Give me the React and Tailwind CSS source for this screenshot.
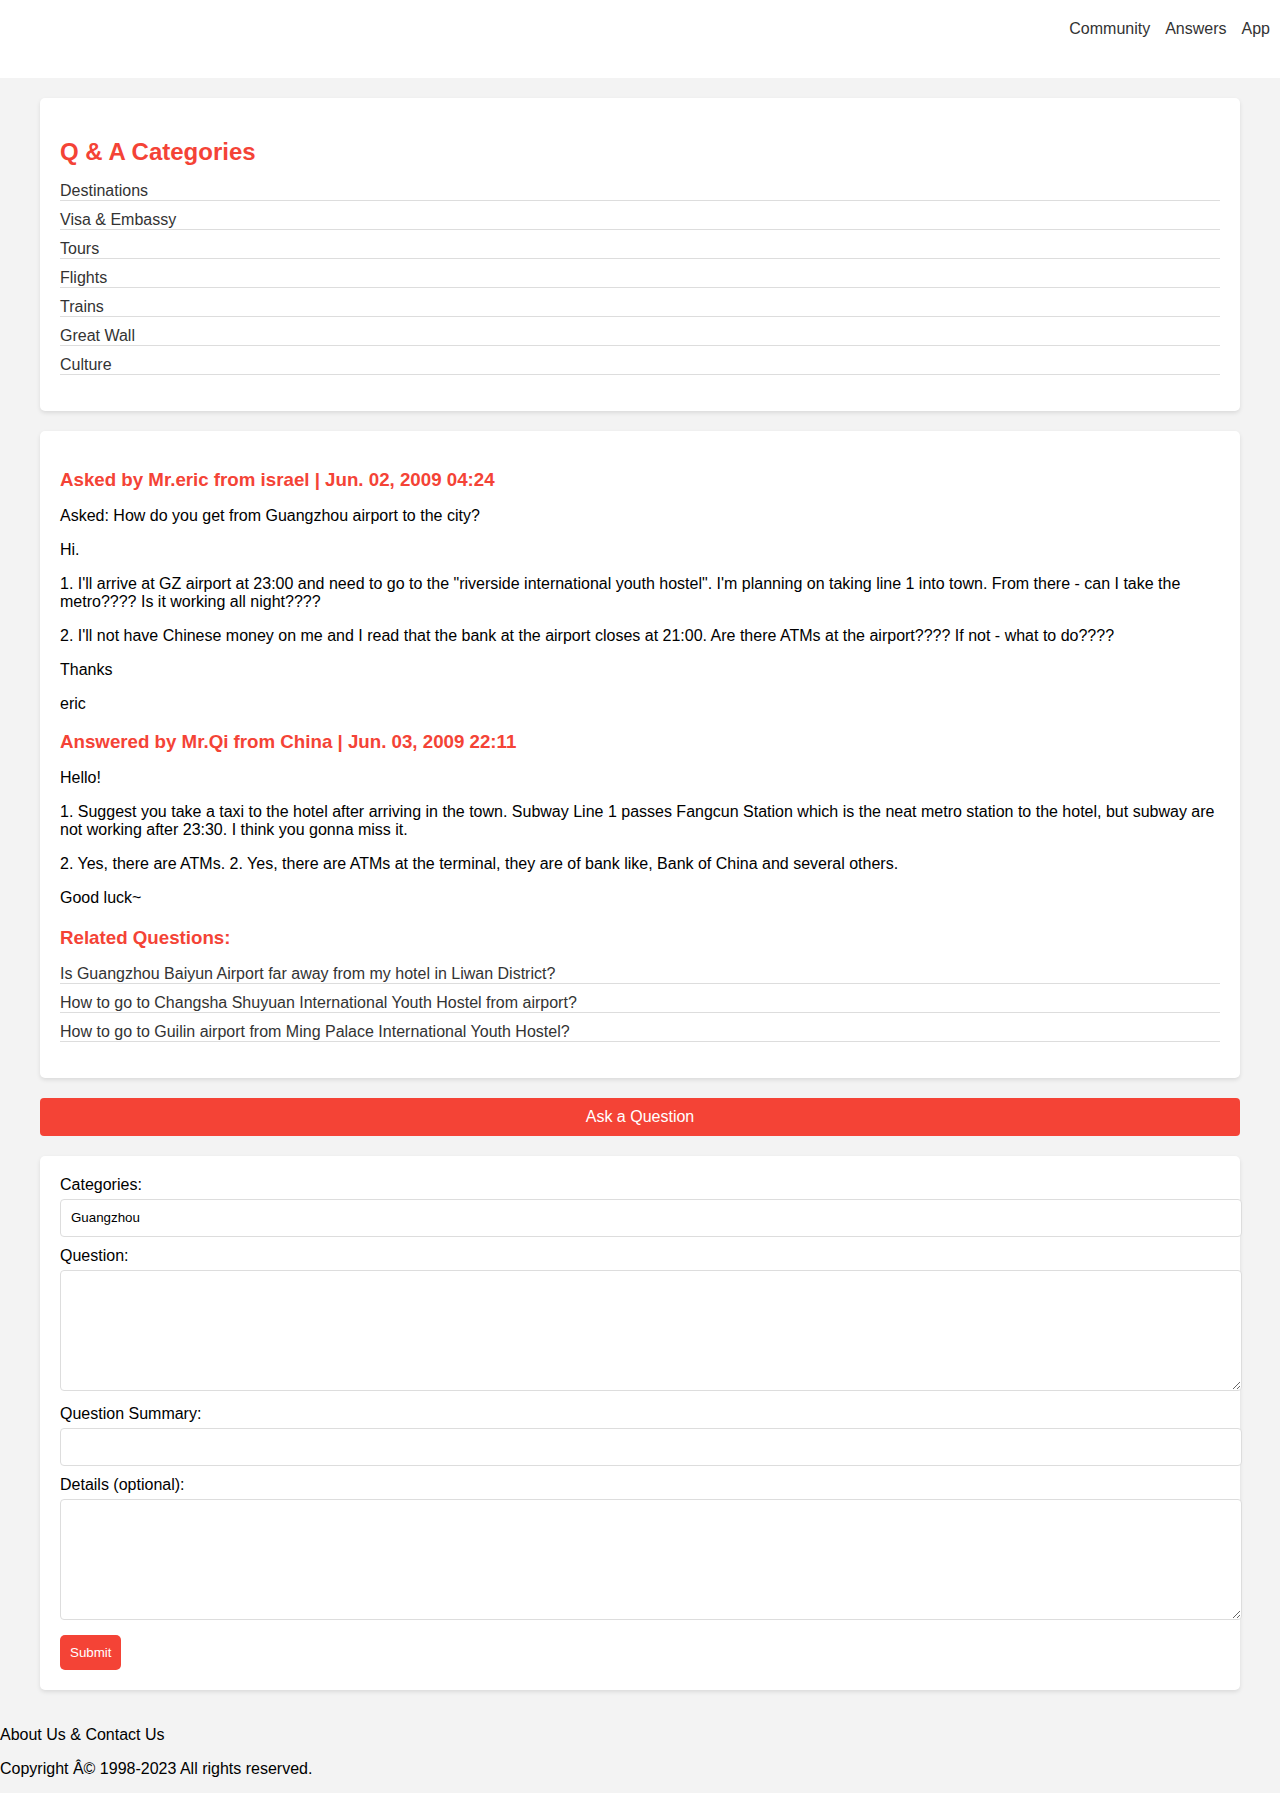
import React from "react";

const categories = [
  "Destinations",
  "Visa & Embassy",
  "Tours",
  "Flights",
  "Trains",
  "Great Wall",
  "Culture",
];

const related = [
  "Is Guangzhou Baiyun Airport far away from my hotel in Liwan District?",
  "How to go to Changsha Shuyuan International Youth Hostel from airport?",
  "How to go to Guilin airport from Ming Palace International Youth Hostel?",
];

const card = "bg-white rounded-[5px] shadow-[0_2px_4px_rgba(0,0,0,0.1)] px-5";
const heading3 = "text-[18.72px] leading-[21.5px] font-bold text-[#f44336]";
const field =
  "block box-content w-full p-[10px] border border-[#ddd] rounded-[4px] text-[13.33px] leading-[15.3px] text-black bg-white";

export default function App() {
  return (
    <div className="min-h-screen bg-[#f3f3f3] text-black font-['Liberation_Sans',Arial,sans-serif] text-[16px] leading-[18px]">
      {/* top bar */}
      <header className="h-[78px] bg-white flex justify-end pt-5 pr-[10px] gap-[15px] text-[#333] leading-[18.4px]">
        <a href="#">Community</a>
        <a href="#">Answers</a>
        <a href="#">App</a>
      </header>

      <main className="px-10 pt-5 pb-5 flex flex-col gap-5">
        {/* categories */}
        <section className={`${card} pt-5 pb-5`}>
          <h2 className="mt-5 mb-[6px] text-[24px] leading-[27.6px] font-bold text-[#f44336]">
            Q &amp; A Categories
          </h2>
          <ul className="mb-4">
            {categories.map((c) => (
              <li key={c} className="pt-[10px] border-b border-[#ddd]">
                <a href="#" className="text-[#333]">
                  {c}
                </a>
              </li>
            ))}
          </ul>
        </section>

        {/* question + answer */}
        <section className={`${card} pt-5 pb-5`}>
          <h3 className={`${heading3} mt-[18.72px] mb-4`}>
            Asked by Mr.eric from israel | Jun. 02, 2009 04:24
          </h3>
          <div className="flex flex-col gap-4">
            <p>Asked: How do you get from Guangzhou airport to the city?</p>
            <p>Hi.</p>
            <p>
              1. I'll arrive at GZ airport at 23:00 and need to go to the "riverside international
              youth hostel". I'm planning on taking line 1 into town. From there - can I take the
              metro???? Is it working all night????
            </p>
            <p>
              2. I'll not have Chinese money on me and I read that the bank at the airport closes at
              21:00. Are there ATMs at the airport???? If not - what to do????
            </p>
            <p>Thanks</p>
            <p>eric</p>
          </div>
          <h3 className={`${heading3} mt-[18px] mb-[17px]`}>
            Answered by Mr.Qi from China | Jun. 03, 2009 22:11
          </h3>
          <div className="flex flex-col gap-4">
            <p>Hello!</p>
            <p>
              1. Suggest you take a taxi to the hotel after arriving in the town. Subway Line 1
              passes Fangcun Station which is the neat metro station to the hotel, but subway are
              not working after 23:30. I think you gonna miss it.
            </p>
            <p>
              2. Yes, there are ATMs. 2. Yes, there are ATMs at the terminal, they are of bank like,
              Bank of China and several others.
            </p>
            <p>Good luck~</p>
          </div>
          <h3 className={`${heading3} mt-5 mb-[6px]`}>Related Questions:</h3>
          <ul className="mb-4">
            {related.map((q) => (
              <li key={q} className="pt-[10px] border-b border-[#ddd]">
                <a href="#" className="text-[#333]">
                  {q}
                </a>
              </li>
            ))}
          </ul>
        </section>

        <button className="w-full h-[38px] bg-[#f44336] text-white rounded-[4px] text-[16px]">
          Ask a Question
        </button>

        {/* ask form */}
        <form className={`${card} pt-5 pb-5 leading-[18.4px]`}>
          <label className="block mb-[5px]">Categories:</label>
          <input className={`${field} mb-[10px]`} defaultValue="Guangzhou" />
          <label className="block mb-[5px]">Question:</label>
          <textarea className={`${field} h-[99px] mb-[14px]`} />
          <label className="block mb-[5px]">Question Summary:</label>
          <input className={`${field} mb-[10px]`} />
          <label className="block mb-[5px]">Details (optional):</label>
          <textarea className={`${field} h-[99px] mb-[15px]`} />
          <button
            type="button"
            className="block px-[10px] py-[10px] bg-[#f44336] text-white rounded-[5px] text-[13.33px] leading-[15.3px]"
          >
            Submit
          </button>
        </form>
      </main>

      <footer className="pt-4 pb-4 flex flex-col gap-4">
        <p>About Us &amp; Contact Us</p>
        <p>Copyright Â© 1998-2023 All rights reserved.</p>
      </footer>
    </div>
  );
}
